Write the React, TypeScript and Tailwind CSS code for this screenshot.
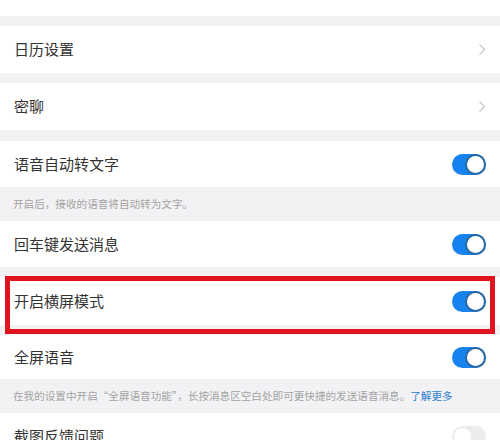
import React from 'react';

const font = { fontFamily: '"Noto Sans CJK SC", "Noto Sans", sans-serif' };

const Chevron: React.FC = () => (
  <svg width="8" height="13" viewBox="0 0 8 13" fill="none">
    <path d="M1.5 1.5L6.5 6.5L1.5 11.5" stroke="#c8c8c8" strokeWidth="1.3" />
  </svg>
);

const Toggle: React.FC<{ on?: boolean }> = ({ on = true }) => (
  <div
    className={
      'relative h-[21px] w-[34px] rounded-full ' + (on ? 'bg-[#1683ee]' : 'bg-[#ececec]')
    }
  >
    <div
      className={
        'absolute top-[2px] h-[17px] w-[17px] rounded-full bg-white ' +
        (on ? 'right-[2px] ring-2 ring-[#2f5d86]/70' : 'left-[2px]')
      }
    />
  </div>
);

const Row: React.FC<{ title: string; h: string; right?: React.ReactNode }> = ({ title, h, right }) => (
  <div className={'flex items-center justify-between bg-white pl-[14px] pr-[14px] ' + h}>
    <span className="text-[15px] text-[#333]">{title}</span>
    {right}
  </div>
);

const Desc: React.FC<{ children: React.ReactNode }> = ({ children }) => (
  <div className="flex h-[34px] items-center whitespace-nowrap pl-[13px] text-[10.6px] text-[#a3a3a3]">
    {children}
  </div>
);

export default function App() {
  return (
    <div className="h-[440px] w-[500px] overflow-hidden bg-[#f2f2f4]" style={font}>
      <div className="h-4 bg-white" />
      <div className="h-[10px]" />
      <Row title="日历设置" h="h-[47px]" right={<Chevron />} />
      <div className="h-[10px]" />
      <Row title="密聊" h="h-[47px]" right={<Chevron />} />
      <div className="h-[11px]" />
      <Row title="语音自动转文字" h="h-[46px]" right={<Toggle />} />
      <Desc>开启后，接收的语音将自动转为文字。</Desc>
      <Row title="回车键发送消息" h="h-[46px]" right={<Toggle />} />
      <div className="h-[10px]" />
      <div className="relative">
        <Row title="开启横屏模式" h="h-[48px]" right={<Toggle />} />
        <div className="pointer-events-none absolute left-[5px] top-[-1px] h-[58px] w-[490px] border-[5px] border-[#e0141e]" />
      </div>
      <div className="h-[10px]" />
      <Row title="全屏语音" h="h-[44px]" right={<Toggle />} />
      <Desc>
        在我的设置中开启“全屏语音功能”，长按消息区空白处即可更快捷的发送语音消息。
        <span className="text-[#2f7fcf]">了解更多</span>
      </Desc>
      <Row title="截图反馈问题" h="h-[46px]" right={<Toggle on={false} />} />
    </div>
  );
}
